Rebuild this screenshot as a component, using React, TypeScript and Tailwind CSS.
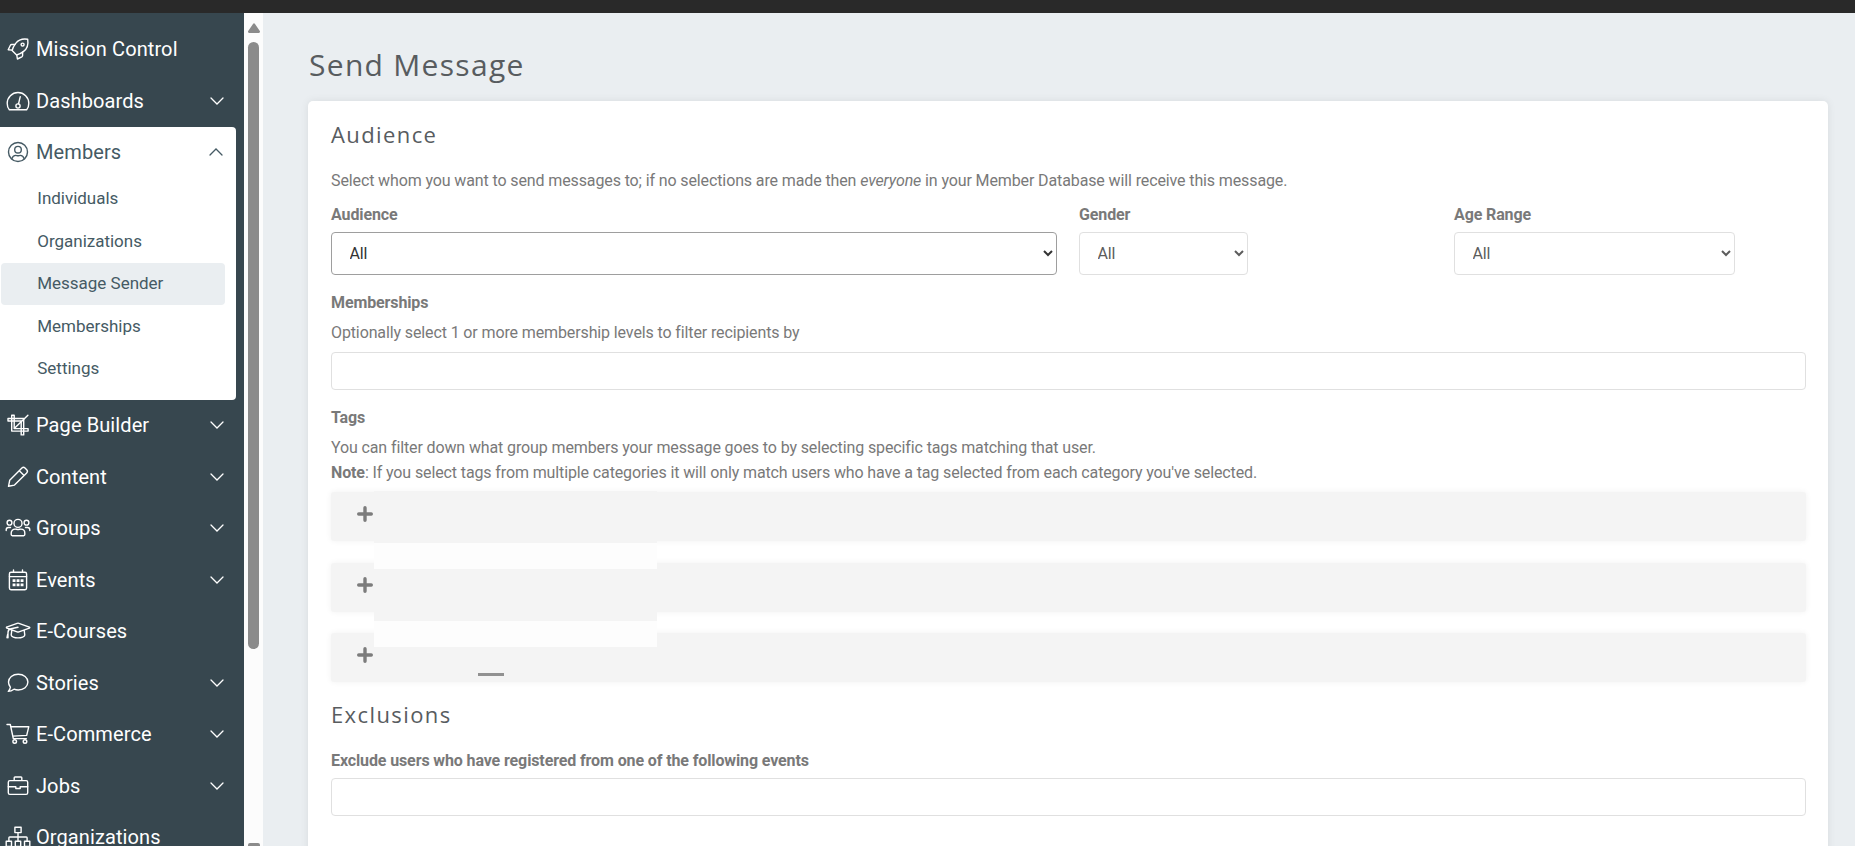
import { useState } from "react";
import type { ReactNode, SelectHTMLAttributes } from "react";

type NavItem = {
  label: string;
  icon: ReactNode;
  expandable?: boolean;
};

const topItems: NavItem[] = [
  { label: "Mission Control", icon: <RocketIcon /> },
  { label: "Dashboards", icon: <GaugeIcon />, expandable: true },
];

const bottomItems: NavItem[] = [
  { label: "Page Builder", icon: <CropIcon />, expandable: true },
  { label: "Content", icon: <PencilIcon />, expandable: true },
  { label: "Groups", icon: <UsersIcon />, expandable: true },
  { label: "Events", icon: <CalendarIcon />, expandable: true },
  { label: "E-Courses", icon: <GraduationIcon /> },
  { label: "Stories", icon: <CommentIcon />, expandable: true },
  { label: "E-Commerce", icon: <CartIcon />, expandable: true },
  { label: "Jobs", icon: <BriefcaseIcon />, expandable: true },
  { label: "Organizations", icon: <SitemapIcon /> },
];

const memberLinks = ["Individuals", "Organizations", "Message Sender", "Memberships", "Settings"];

export default function App() {
  return (
    <div className="flex h-screen flex-col overflow-hidden bg-[#eaeef1] font-[Roboto,sans-serif]">
      <div className="h-[13px] shrink-0 bg-[#292929]" />
      <div className="flex min-h-0 flex-1">
        <Sidebar />
        <SidebarScrollbar />
        <main className="min-w-0 flex-1 overflow-hidden pr-[27px] pl-[45px]">
          <h1 className="mb-[14px] pt-[30px] pl-px font-['Open_Sans',sans-serif] text-[30px] leading-[44px] tracking-[1.3px] text-[#585c5f]">
            Send Message
          </h1>
          <MessageForm />
        </main>
      </div>
    </div>
  );
}

function Sidebar() {
  const [active, setActive] = useState("Message Sender");

  return (
    <nav className="w-[244px] shrink-0 overflow-hidden bg-[#37474f] pt-[10.7px] text-white">
      {topItems.map((item) => (
        <NavRow key={item.label} item={item} />
      ))}
      <div className="mr-2 h-[273.2px] rounded-r-[4px] bg-white text-[#455a64]">
        <NavRow item={{ label: "Members", icon: <UserIcon />, expandable: true }} open />
        <ul>
          {memberLinks.map((label) => (
            <li key={label} className="pr-[11px] pl-px">
              <button
                type="button"
                onClick={() => setActive(label)}
                className={`flex h-[42.4px] w-full items-center rounded-[4px] pl-[36.3px] text-[17px] tracking-[-0.02px] ${
                  active === label ? "bg-[#eaeef1]" : ""
                }`}
              >
                {label}
              </button>
            </li>
          ))}
        </ul>
      </div>
      {bottomItems.map((item) => (
        <NavRow key={item.label} item={item} />
      ))}
    </nav>
  );
}

function NavRow({ item, open = false }: { item: NavItem; open?: boolean }) {
  return (
    <div className="flex h-[51.45px] items-center pl-[5.3px]">
      {item.icon}
      <span className="ml-[4.7px] text-[20px] leading-none tracking-[0.1px]">{item.label}</span>
      {item.expandable && (
        <svg
          viewBox="0 0 14 8"
          className={`ml-auto h-2 w-3.5 ${open ? "mr-[13px] rotate-180" : "mr-5"}`}
          fill="none"
          stroke="currentColor"
          strokeWidth="1.3"
          strokeLinecap="round"
        >
          <path d="m1 1 6 6 6-6" />
        </svg>
      )}
    </div>
  );
}

function SidebarScrollbar() {
  return (
    <div className="flex w-[19px] shrink-0 flex-col items-center overflow-hidden bg-[#fcfcfc] pt-2.5">
      <svg viewBox="0 0 12 10" className="h-2.5 w-3 shrink-0 fill-[#8b8b8b]">
        <path d="M5 .9a1.2 1.2 0 0 1 2 0l4.8 7.2c.5.8 0 1.9-1 1.9H1.200C.2 10-.3 8.900.2 8.100z" />
      </svg>
      <div className="mt-[9px] h-[607px] w-[11px] shrink-0 rounded-full bg-[#8b8b8b]" />
      <div className="mt-[194px] h-2.5 w-3 shrink-0 rounded-[2px] bg-[#8b8b8b]" />
    </div>
  );
}

function MessageForm() {
  return (
    <section className="h-[800px] rounded-t-[5px] bg-white pt-[17px] pr-[22px] pl-[23px] text-[16px] leading-[25px] tracking-[-0.12px] text-[#797979] shadow-[0_0_8px_rgba(0,0,0,0.08)]">
      <SectionTitle>Audience</SectionTitle>
      <p className="mt-[18px]">
        Select whom you want to send messages to; if no selections are made then <em>everyone</em> in
        your Member Database will receive this message.
      </p>
      <div className="mt-[9px] flex">
        <div className="w-[748px] pr-[22px]">
          <Label>Audience</Label>
          <Select className="w-full border-[#9e9e9e] text-[#333]" />
        </div>
        <div className="w-[375px]">
          <Label>Gender</Label>
          <Select className="w-[169px] border-[#e0e0e0] text-[#5c5c5c]" />
        </div>
        <div>
          <Label>Age Range</Label>
          <Select className="w-[281px] border-[#e0e0e0] text-[#5c5c5c]" />
        </div>
      </div>

      <div className="mt-[15px]">
        <Label>Memberships</Label>
        <p className="mb-[7px]">
          Optionally select 1 or more membership levels to filter recipients by
        </p>
        <TextBox />
      </div>

      <div className="mt-[15px]">
        <Label>Tags</Label>
        <p className="mb-[7px]">
          You can filter down what group members your message goes to by selecting specific tags
          matching that user.
          <br />
          <strong>Note</strong>: If you select tags from multiple categories it will only match users
          who have a tag selected from each category you've selected.
        </p>
        <TagCategories />
      </div>

      <div className="mt-[16px]">
        <SectionTitle>Exclusions</SectionTitle>
        <div className="mt-[18px]">
          <Label>Exclude users who have registered from one of the following events</Label>
          <TextBox />
        </div>
      </div>
    </section>
  );
}

function SectionTitle({ children }: { children: ReactNode }) {
  return (
    <h2 className="font-['Open_Sans',sans-serif] text-[22px] leading-[32px] tracking-[1.4px] text-[#585c5f]">
      {children}
    </h2>
  );
}

function Label({ children }: { children: ReactNode }) {
  return <label className="block pb-[5px] leading-[25px] font-bold">{children}</label>;
}

function Select({ className, ...props }: SelectHTMLAttributes<HTMLSelectElement>) {
  return (
    <select
      className={`block h-[43px] rounded-[4px] border bg-white pl-[13.5px] text-[16px] ${className}`}
      {...props}
    >
      <option>All</option>
    </select>
  );
}

function TextBox() {
  return (
    <input
      type="text"
      className="block h-[38px] w-full rounded-[4px] border border-[#e0e0e0] bg-white px-3"
    />
  );
}

function TagCategories() {
  return (
    <div className="relative flex flex-col gap-[21.3px]">
      {[0, 1, 2].map((index) => (
        <div
          key={index}
          className="h-[49.3px] rounded-[3px] bg-[#f4f4f4] pt-[14px] pl-[25.7px] shadow-[0_0_6px_rgba(0,0,0,0.06)]"
        >
          <svg viewBox="0 0 16 16" className="size-4 text-[#7c7c7c]" stroke="currentColor">
            <path d="M8 1.700v12.600M1.700 8h12.600" strokeWidth="3.400" strokeLinecap="round" />
          </svg>
        </div>
      ))}
      {/* Category names are covered by flat blocks */}
      <div className="absolute top-[-1px] left-[43px] flex w-[283px] flex-col">
        <div className="h-[52px] bg-[#f4f4f4]" />
        <div className="h-[26px] bg-[#fdfdfd]" />
        <div className="h-[52px] bg-[#f4f4f4]" />
        <div className="h-[26px] bg-[#fdfdfd]" />
        <div className="h-[26px] bg-[#f4f4f4]" />
        <div className="ml-[104px] h-[3px] w-[26px] bg-[#919191]" />
      </div>
    </div>
  );
}

function Icon({ children }: { children: ReactNode }) {
  return (
    <svg
      viewBox="0 0 26 24"
      className="h-6 w-[26px] shrink-0"
      fill="none"
      stroke="currentColor"
      strokeWidth="1.4"
      strokeLinecap="round"
      strokeLinejoin="round"
    >
      {children}
    </svg>
  );
}

function RocketIcon() {
  return (
    <Icon>
      <path d="M22.700 2.300c-5.400-.9-9.200.5-12 4.100C8.900 8.700 7.700 11.300 7.100 13.500l4.500 4.500c2.200-.6 4.800-1.800 7-3.600 3.600-2.800 5-6.600 4.100-12.100Z" />
      <path d="M9.800 7.500H6.700c-.6 0-1 .2-1.300.8L3.200 12.700l3.900.4M17.600 15.300v3.200c0 .6-.3 1-.8 1.300l-4.400 2.200-.6-4" />
      <circle cx="17.600" cy="7.600" r="1.500" />
    </Icon>
  );
}

function GaugeIcon() {
  return (
    <Icon>
      <path d="M4.300 20.800C2.700 19.200 2.200 16.600 2.200 14.300a10.800 10.800 0 0 1 21.600 0c0 2.300-.5 4.900-2.100 6.500Z" />
      <circle cx="13" cy="17" r="2.100" />
      <path d="m13.500 14.800 1.700-7" />
    </Icon>
  );
}

function UserIcon() {
  return (
    <Icon>
      <circle cx="13" cy="12" r="9.500" />
      <circle cx="13" cy="9.700" r="3.300" />
      <path d="M6.800 18.800c.7-2.300 2.200-3.400 4-3.400.8 0 1.200.4 2.200.4s1.400-.4 2.200-.4c1.800 0 3.300 1.100 4 3.400" />
    </Icon>
  );
}

function CropIcon() {
  return (
    <Icon>
      <path d="M6.700 2.300h2.500v13.300h13.900v2.500H6.700Z" />
      <path d="M3 5.500h15.700v16.400h-2.500V8H3Z" />
      <path d="M9.500 15.300 22.900 2.300" />
    </Icon>
  );
}

function PencilIcon() {
  return (
    <Icon>
      <path d="m3.500 21.300 1.200-6L16.900 3.100a2.200 2.200 0 0 1 3.100 0l1.700 1.700a2.200 2.200 0 0 1 0 3.100L9.500 20.100ZM14.300 5.700l4.800 4.800" />
    </Icon>
  );
}

function UsersIcon() {
  return (
    <Icon>
      <circle cx="13" cy="7.400" r="4" />
      <circle cx="4.500" cy="6.700" r="2.400" />
      <circle cx="21.500" cy="6.700" r="2.400" />
      <path d="M6.200 18.600v-1.700c0-2.300 1.700-3.800 3.900-3.800 1 0 1.600.4 2.900.4s1.900-.4 2.900-.4c2.200 0 3.900 1.500 3.900 3.800v1.700c0 .7-.5 1.100-1.100 1.100H7.300c-.6 0-1.100-.4-1.100-1.100ZM1.200 14.600v-.9c0-1.400.9-2.200 2.200-2.200h2.100M24.800 14.600v-.9c0-1.400-.9-2.200-2.200-2.200h-2.100" />
    </Icon>
  );
}

function CalendarIcon() {
  return (
    <Icon>
      <rect x="4.400" y="4.300" width="17.200" height="17.400" rx="1.600" />
      <path d="M4.400 8.600h17.200M8.500 1.900v2.400M17.500 1.900v2.400" />
      <path
        d="M7.600 11.200h2.900v2.800H7.600ZM11.600 11.200h2.900v2.800h-2.900ZM15.600 11.200h2.900v2.800h-2.900ZM7.600 15.400h2.900v2.800H7.600ZM11.600 15.400h2.900v2.800h-2.900ZM15.600 15.400h2.900v2.800h-2.900Z"
        fill="currentColor"
        stroke="none"
      />
    </Icon>
  );
}

function GraduationIcon() {
  return (
    <Icon>
      <path d="M1.600 8.100 12.100 4.300q.9-.3 1.800 0l10.500 3.800q.8.500 0 1L13.900 12.800q-.9.300-1.800 0L4.500 10M1.600 8.100q-.5.600.2 1L4.500 10M13 8.300 6 9.800Q3 10.500 3 13.500v5.200M2 18.700l.7-3.600M6.800 11.300 6.200 16c0 1.700 3.400 2.900 6.800 2.900s6.800-1.200 6.800-2.900l-.6-4.700" />
    </Icon>
  );
}

function CommentIcon() {
  return (
    <Icon>
      <path d="M13.200 3.200c5.500 0 9.700 3.500 9.700 7.900s-4.200 7.900-9.700 7.900c-1.600 0-3-.3-4.200-.8-1.300 1-3.400 2.200-5.700 2.200 1-1.100 1.900-2.600 2.100-4.200-1.200-1.400-1.900-3.100-1.900-5.100 0-4.400 4.200-7.900 9.700-7.900Z" />
    </Icon>
  );
}

function CartIcon() {
  return (
    <Icon>
      <path d="M2 2.500h3.300l3 14.100h13M5.800 4.700h18l-2.100 8.700-14 .7" />
      <circle cx="9.700" cy="19.500" r="1.800" />
      <circle cx="20" cy="19.500" r="1.800" />
    </Icon>
  );
}

function BriefcaseIcon() {
  return (
    <Icon>
      <rect x="3.300" y="6.600" width="19.400" height="13.800" rx="1.600" />
      <path d="M9.200 6.400V3.800c0-.5.300-.8.800-.8h6c.5 0 .8.300.8.800v2.600M3.300 12.700h7.500v1.800h4.400v-1.800h7.500" />
    </Icon>
  );
}

function SitemapIcon() {
  return (
    <Icon>
      <path d="M9.900 2.300h6.200v5.300H9.900ZM1.200 16.200h5.300v5.300H1.200ZM10.300 16.200h5.400v5.300h-5.400ZM19.500 16.200h5.300v5.300h-5.300ZM13 7.600v8.600M3.900 16.200v-3.400c0-.5.300-.8.800-.8h16.600c.5 0 .8.300.8.800v3.400" />
    </Icon>
  );
}
